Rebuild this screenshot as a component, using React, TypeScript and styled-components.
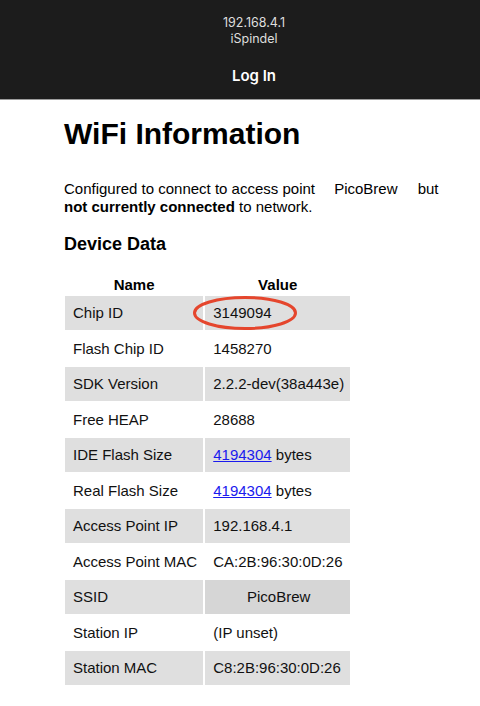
import React from "react";
import styled, { createGlobalStyle } from "styled-components";

const Global = createGlobalStyle`
  html, body { margin: 0; padding: 0; background: #ffffff; }
  body { font-family: "Liberation Sans", Arial, Helvetica, sans-serif; color: #111; }
`;

const Header = styled.header`
  height: 100px;
  box-sizing: border-box;
  background: #1c1c1c;
  border-bottom: 1px solid #9c9c9c;
  display: flex;
  flex-direction: column;
  align-items: center;
  padding: 15px 0 0 28px;
  font-family: Inter, "Noto Sans", sans-serif;
`;

const Address = styled.div`
  font-size: 12.5px;
  line-height: 16px;
  color: #dedede;
`;

const LogIn = styled.div`
  margin-top: 19px;
  font-size: 15px;
  line-height: 20px;
  font-weight: 600;
  color: #ffffff;
`;

const Main = styled.main`
  padding: 0 32px 0 64px;
`;

const Title = styled.h1`
  margin: 17px 0 0;
  font-size: 30px;
  line-height: 34px;
  font-weight: 700;
  color: #000;
`;

const Para = styled.p`
  margin: 29px 0 0;
  font-size: 15px;
  line-height: 18px;
  color: #000;
`;

const Ap = styled.span`
  display: inline-block;
  padding: 0 16px 0 15px;
`;

const Section = styled.h3`
  margin: 18px 0 0;
  font-size: 18px;
  line-height: 21px;
  font-weight: 700;
  color: #000;
`;

const Table = styled.table`
  margin: 12px 0 0 -1px;
  border-collapse: separate;
  border-spacing: 2px;
  font-size: 15px;
  color: #111;
`;

const Th = styled.th`
  padding: 7px 8px 1px;
  line-height: 17px;
  font-weight: 700;
  text-align: center;
  color: #000;
`;

const Td = styled.td<{ $shaded?: boolean; $wide?: boolean; $center?: boolean; $dark?: boolean }>`
  position: relative;
  height: 33.5px;
  padding: 0 6px 0 8px;
  box-sizing: border-box;
  line-height: 17px;
  white-space: nowrap;
  width: ${(p) => (p.$wide ? "145px" : "138px")};
  text-align: ${(p) => (p.$center ? "center" : "left")};
  background: ${(p) => (p.$dark ? "#d6d6d6" : p.$shaded ? "#dfdfdf" : "transparent")};
`;

const Link = styled.a`
  color: #1a1aee;
  text-decoration: underline;
`;

const Circle = styled.svg`
  position: absolute;
  left: -12px;
  top: 0px;
  width: 104px;
  height: 34px;
  pointer-events: none;
  overflow: visible;
`;

type Row = { name: string; value: React.ReactNode; center?: boolean; dark?: boolean; circle?: boolean };

const rows: Row[] = [
  { name: "Chip ID", value: "3149094", circle: true },
  { name: "Flash Chip ID", value: "1458270" },
  { name: "SDK Version", value: "2.2.2-dev(38a443e)" },
  { name: "Free HEAP", value: "28688" },
  { name: "IDE Flash Size", value: (<><Link href="#">4194304</Link> bytes</>) },
  { name: "Real Flash Size", value: (<><Link href="#">4194304</Link> bytes</>) },
  { name: "Access Point IP", value: "192.168.4.1" },
  { name: "Access Point MAC", value: "CA:2B:96:30:0D:26" },
  { name: "SSID", value: "PicoBrew", center: true, dark: true },
  { name: "Station IP", value: "(IP unset)" },
  { name: "Station MAC", value: "C8:2B:96:30:0D:26" },
];

export default function App() {
  return (
    <>
      <Global />
      <Header>
        <Address>192.168.4.1</Address>
        <Address>iSpindel</Address>
        <LogIn>Log In</LogIn>
      </Header>
      <Main>
        <Title>WiFi Information</Title>
        <Para>
          Configured to connect to access point <Ap>PicoBrew</Ap> but{" "}
          <b>not currently connected</b> to network.
        </Para>
        <Section>Device Data</Section>
        <Table>
          <thead>
            <tr>
              <Th>Name</Th>
              <Th>Value</Th>
            </tr>
          </thead>
          <tbody>
            {rows.map((r, i) => (
              <tr key={r.name}>
                <Td $shaded={i % 2 === 0}>{r.name}</Td>
                <Td $wide $shaded={i % 2 === 0} $center={r.center} $dark={r.dark}>
                  {r.value}
                  {r.circle && (
                    <Circle viewBox="0 0 104 34">
                      <ellipse cx="52" cy="17" rx="50.5" ry="15.5" fill="none" stroke="#e5462d" strokeWidth="3" />
                    </Circle>
                  )}
                </Td>
              </tr>
            ))}
          </tbody>
        </Table>
      </Main>
    </>
  );
}
